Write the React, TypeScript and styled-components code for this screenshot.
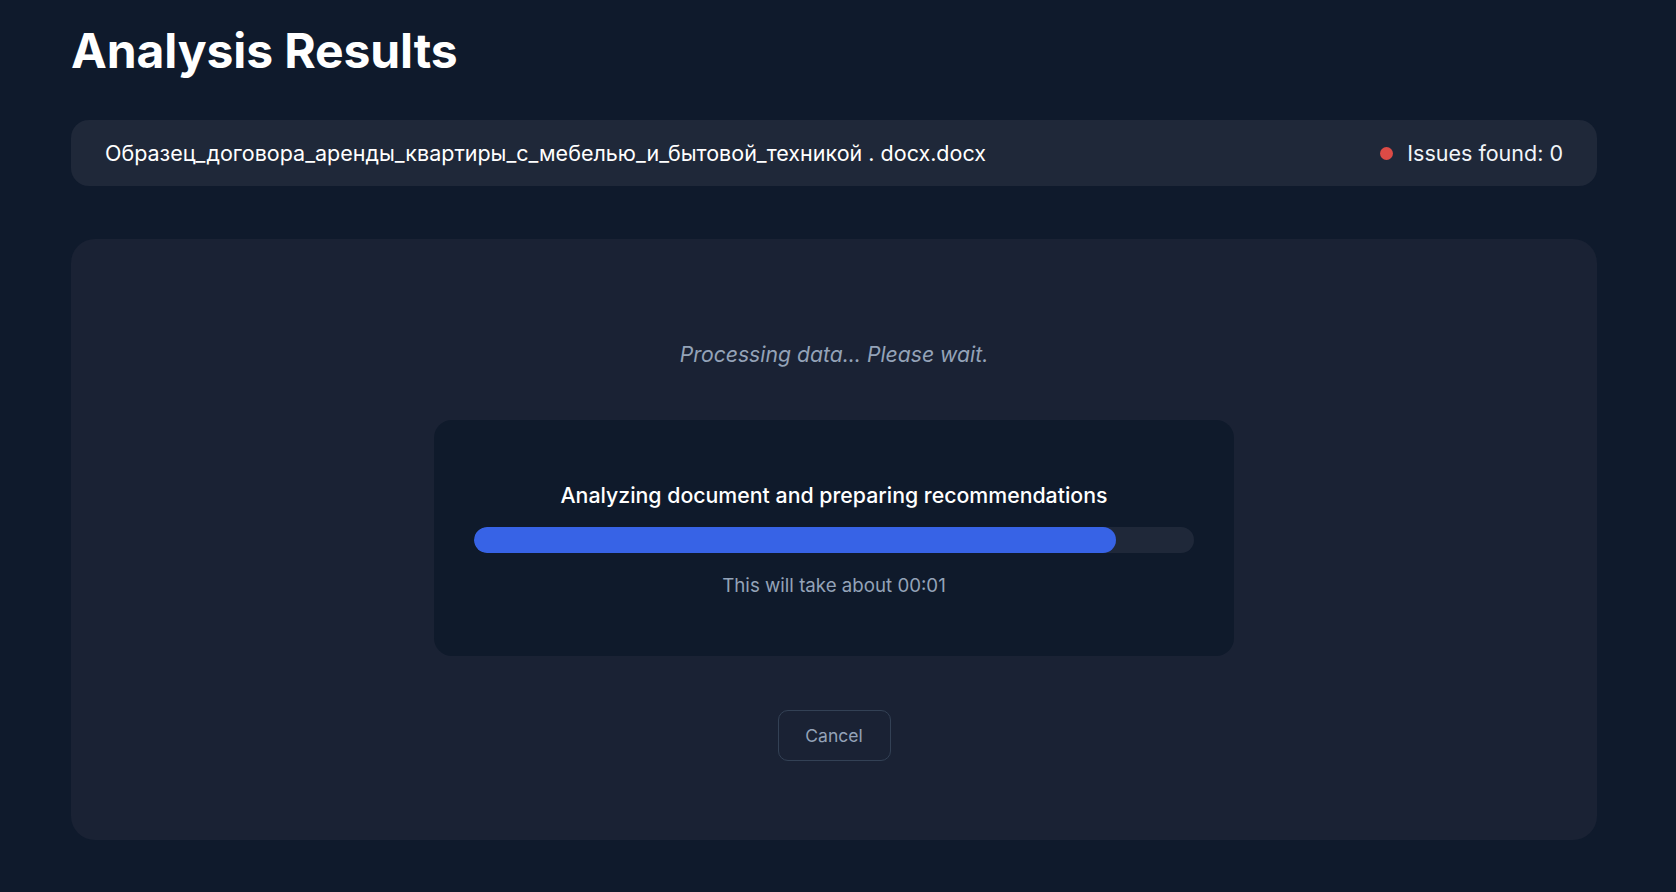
import React from "react";
import styled, { createGlobalStyle } from "styled-components";

const GlobalStyle = createGlobalStyle`
  html, body {
    margin: 0;
    padding: 0;
    background: #0f1a2c;
  }
  body {
    font-family: Inter, "Noto Sans", sans-serif;
    color: #ffffff;
  }
  * { box-sizing: border-box; }
`;

const Page = styled.div`
  min-height: 892px;
  background: #0f1a2c;
  padding: 22px 79px 40px 71px;
  display: flex;
  flex-direction: column;
`;

const Title = styled.h1`
  margin: 0;
  font-size: 48px;
  line-height: 58px;
  font-weight: 700;
  color: #ffffff;
  letter-spacing: -0.1px;
`;

const FileBar = styled.div`
  margin-top: 40px;
  height: 66px;
  border-radius: 18px;
  background: #1f2839;
  display: flex;
  align-items: center;
  justify-content: space-between;
  padding: 0 34px;
`;

const FileName = styled.span`
  font-size: 21.5px;
  font-weight: 400;
  color: #ffffff;
`;

const Issues = styled.div`
  display: flex;
  align-items: center;
  gap: 14px;
  font-size: 21.5px;
  color: #f1f5f9;
`;

const Dot = styled.span`
  width: 13px;
  height: 13px;
  border-radius: 50%;
  background: #dc4b46;
`;

const MainCard = styled.section`
  margin-top: 53px;
  height: 601px;
  border-radius: 24px;
  background: #1a2234;
  display: flex;
  flex-direction: column;
  align-items: center;
  padding-top: 101px;
`;

const Status = styled.p`
  margin: 0;
  font-size: 21.2px;
  line-height: 28px;
  font-style: italic;
  color: #94a3b8;
`;

const ProgressCard = styled.div`
  margin-top: 52px;
  width: 800px;
  height: 236px;
  border-radius: 18px;
  background: #0f1a2b;
  padding: 61px 40px 0;
  display: flex;
  flex-direction: column;
  align-items: center;
`;

const StepLabel = styled.div`
  font-size: 21.3px;
  line-height: 28px;
  font-weight: 500;
  color: #ffffff;
`;

const Track = styled.div`
  margin-top: 18px;
  width: 100%;
  height: 26px;
  border-radius: 13px;
  background: #1f2839;
  overflow: hidden;
`;

const Fill = styled.div`
  height: 100%;
  border-radius: 13px;
  background: #3763e6;
`;

const Eta = styled.div`
  margin-top: 21px;
  font-size: 18.7px;
  line-height: 24px;
  color: #94a3b8;
`;

const CancelButton = styled.button`
  margin-top: 54px;
  width: 113px;
  height: 51px;
  border-radius: 10px;
  border: 1.5px solid #334155;
  background: transparent;
  color: #94a3b8;
  font-family: Inter, "Noto Sans", sans-serif;
  font-size: 17.5px;
  cursor: pointer;
`;

export default function App() {
  const progress = 89.2;
  return (
    <>
      <GlobalStyle />
      <Page>
        <Title>Analysis Results</Title>
        <FileBar>
          <FileName>Образец_договора_аренды_квартиры_с_мебелью_и_бытовой_техникой . docx.docx</FileName>
          <Issues>
            <Dot />
            <span>Issues found: 0</span>
          </Issues>
        </FileBar>
        <MainCard>
          <Status>Processing data... Please wait.</Status>
          <ProgressCard>
            <StepLabel>Analyzing document and preparing recommendations</StepLabel>
            <Track>
              <Fill style={{ width: `${progress}%` }} />
            </Track>
            <Eta>This will take about 00:01</Eta>
          </ProgressCard>
          <CancelButton>Cancel</CancelButton>
        </MainCard>
      </Page>
    </>
  );
}
